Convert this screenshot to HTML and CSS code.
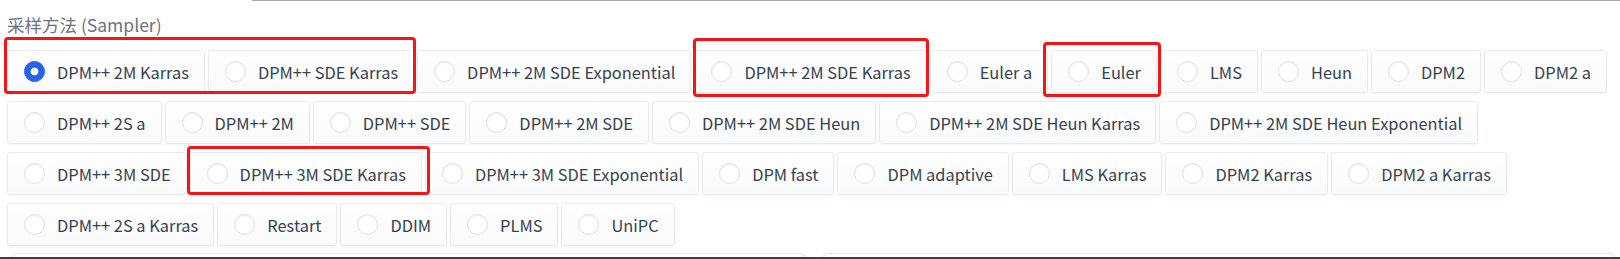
FILE: index.html
```html
<!DOCTYPE html>
<html lang="zh">
<head>
    <meta charset="UTF-8">
    <meta name="viewport" content="width=device-width, initial-scale=1.0">
    <title>Sampler</title>
    <link rel="stylesheet" href="styles.css">
</head>
<body>
    <div class="page">
        <div class="top-line"></div>

        <div class="sampler">
            <span class="block-title">采样方法 (Sampler)</span>
            <div class="radio-group">
                <label class="radio-item"><input type="radio" name="sampler" checked><span>DPM++ 2M Karras</span></label>
                <label class="radio-item"><input type="radio" name="sampler"><span>DPM++ SDE Karras</span></label>
                <label class="radio-item"><input type="radio" name="sampler"><span>DPM++ 2M SDE Exponential</span></label>
                <label class="radio-item"><input type="radio" name="sampler"><span>DPM++ 2M SDE Karras</span></label>
                <label class="radio-item"><input type="radio" name="sampler"><span>Euler a</span></label>
                <label class="radio-item"><input type="radio" name="sampler"><span>Euler</span></label>
                <label class="radio-item"><input type="radio" name="sampler"><span>LMS</span></label>
                <label class="radio-item"><input type="radio" name="sampler"><span>Heun</span></label>
                <label class="radio-item"><input type="radio" name="sampler"><span>DPM2</span></label>
                <label class="radio-item"><input type="radio" name="sampler"><span>DPM2 a</span></label>
                <label class="radio-item"><input type="radio" name="sampler"><span>DPM++ 2S a</span></label>
                <label class="radio-item"><input type="radio" name="sampler"><span>DPM++ 2M</span></label>
                <label class="radio-item"><input type="radio" name="sampler"><span>DPM++ SDE</span></label>
                <label class="radio-item"><input type="radio" name="sampler"><span>DPM++ 2M SDE</span></label>
                <label class="radio-item"><input type="radio" name="sampler"><span>DPM++ 2M SDE Heun</span></label>
                <label class="radio-item"><input type="radio" name="sampler"><span>DPM++ 2M SDE Heun Karras</span></label>
                <label class="radio-item"><input type="radio" name="sampler"><span>DPM++ 2M SDE Heun Exponential</span></label>
                <label class="radio-item"><input type="radio" name="sampler"><span>DPM++ 3M SDE</span></label>
                <label class="radio-item"><input type="radio" name="sampler"><span>DPM++ 3M SDE Karras</span></label>
                <label class="radio-item"><input type="radio" name="sampler"><span>DPM++ 3M SDE Exponential</span></label>
                <label class="radio-item"><input type="radio" name="sampler"><span>DPM fast</span></label>
                <label class="radio-item"><input type="radio" name="sampler"><span>DPM adaptive</span></label>
                <label class="radio-item"><input type="radio" name="sampler"><span>LMS Karras</span></label>
                <label class="radio-item"><input type="radio" name="sampler"><span>DPM2 Karras</span></label>
                <label class="radio-item"><input type="radio" name="sampler"><span>DPM2 a Karras</span></label>
                <label class="radio-item"><input type="radio" name="sampler"><span>DPM++ 2S a Karras</span></label>
                <label class="radio-item"><input type="radio" name="sampler"><span>Restart</span></label>
                <label class="radio-item"><input type="radio" name="sampler"><span>DDIM</span></label>
                <label class="radio-item"><input type="radio" name="sampler"><span>PLMS</span></label>
                <label class="radio-item"><input type="radio" name="sampler"><span>UniPC</span></label>
            </div>
        </div>

        <div class="next-row">
            <div class="next-box"></div>
            <div class="next-box"></div>
        </div>
        <div class="bottom-bar"></div>

        <!-- highlight marks drawn over the options -->
        <div class="mark mark-1"></div>
        <div class="mark mark-2"></div>
        <div class="mark mark-3"></div>
        <div class="mark mark-4"></div>
    </div>
</body>
</html>
```

FILE: styles.css
```css
body {
    margin: 0;
    background: #fff;
    font-family: "Noto Sans CJK SC", "Liberation Sans", sans-serif;
    overflow: hidden;
}
.page {
    position: relative;
    width: 1620px;
    height: 259px;
}
.top-line {
    margin-left: 252px;
    height: 0;
    border-top: 1px solid #a9a9a9;
}
.sampler {
    padding: 12px 0 0 7px;
}
.block-title {
    display: block;
    font-size: 17.5px;
    line-height: 24px;
    color: #6b7280;
    margin-bottom: 13px;
}
.radio-group {
    display: flex;
    flex-wrap: wrap;
    column-gap: 3px;
    row-gap: 8px;
}
.radio-item {
    display: flex;
    align-items: center;
    height: 43px;
    box-sizing: border-box;
    padding: 0 15px 0 16px;
    border: 1px solid #e8eaed;
    border-radius: 3px;
    background: linear-gradient(to top, #f9fafb, #fff);
    box-shadow: 0 1px 2px rgba(0, 0, 0, 0.05);
    font-size: 16.4px;
    color: #374151;
    white-space: nowrap;
    cursor: pointer;
}
.radio-item input {
    appearance: none;
    -webkit-appearance: none;
    width: 21px;
    height: 21px;
    margin: 0 12px 0 0;
    border: 1px solid #dcdfe4;
    border-radius: 50%;
    background: #fff;
    box-shadow: inset 0 1px 2px rgba(0, 0, 0, 0.06);
    flex-shrink: 0;
}
.radio-item input:checked {
    border-color: #2563eb;
    background: #2563eb radial-gradient(circle, #fff 0, #fff 3.6px, transparent 4.2px);
    box-shadow: none;
}
.next-row {
    display: flex;
    gap: 14px;
    margin: 7px 3px 0 10px;
}
.next-box {
    flex: 1;
    height: 8px;
    border: 1px solid #e5e7eb;
    border-bottom: none;
    border-radius: 8px 8px 0 0;
}
.bottom-bar {
    position: absolute;
    left: 0;
    right: 0;
    bottom: 0;
    height: 2px;
    background: #3d3d3d;
}
.mark {
    position: absolute;
    border: 3px solid #f31616;
    border-radius: 4px;
    box-sizing: border-box;
}
.mark-1 { left: 4px; top: 37px; width: 412px; height: 57px; }
.mark-2 { left: 693px; top: 38px; width: 236px; height: 59px; }
.mark-3 { left: 1043px; top: 42px; width: 118px; height: 55px; }
.mark-4 { left: 187px; top: 146px; width: 243px; height: 49px; }
```
